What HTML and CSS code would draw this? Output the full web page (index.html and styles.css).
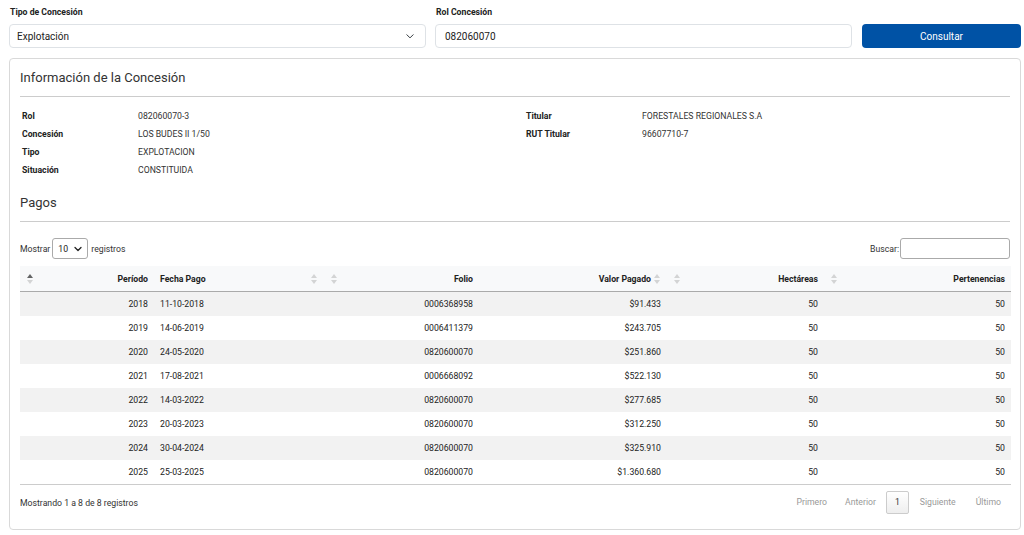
FILE: index.html
```html
<!DOCTYPE html>
<html lang="es">
<head>
    <meta charset="UTF-8">
    <meta name="viewport" content="width=device-width, initial-scale=1.0">
    <title>Consulta de Concesión</title>
    <link rel="stylesheet" href="styles.css">
</head>
<body>
    <form class="search-form">
        <div class="field">
            <label>Tipo de Concesión</label>
            <div class="select-box">
                <span>Explotación</span>
                <svg class="chevron" width="10" height="10" viewBox="0 0 16 16"><path d="M3 6l5 5 5-5" fill="none" stroke="#343a40" stroke-width="1.6" stroke-linecap="round" stroke-linejoin="round"/></svg>
            </div>
        </div>
        <div class="field">
            <label>Rol Concesión</label>
            <div class="text-box">082060070</div>
        </div>
        <div class="field">
            <label>&nbsp;</label>
            <button type="button" class="btn-consultar">Consultar</button>
        </div>
    </form>

    <section class="card">
        <h2 class="card-title">Información de la Concesión</h2>
        <div class="info-grid">
            <div class="info-col">
                <div class="info-row"><span class="info-label">Rol</span><span>082060070-3</span></div>
                <div class="info-row"><span class="info-label">Concesión</span><span>LOS BUDES II 1/50</span></div>
                <div class="info-row"><span class="info-label">Tipo</span><span>EXPLOTACION</span></div>
                <div class="info-row"><span class="info-label">Situación</span><span>CONSTITUIDA</span></div>
            </div>
            <div class="info-col">
                <div class="info-row"><span class="info-label">Titular</span><span>FORESTALES REGIONALES S.A</span></div>
                <div class="info-row"><span class="info-label">RUT Titular</span><span>96607710-7</span></div>
            </div>
        </div>

        <h2 class="card-title pagos-title">Pagos</h2>

        <div class="dt-top">
            <div class="dt-length">
                Mostrar
                <div class="length-select">
                    <span>10</span>
                    <svg width="8" height="8" viewBox="0 0 16 16"><path d="M2 5l6 6 6-6" fill="none" stroke="#222" stroke-width="2.6" stroke-linecap="round" stroke-linejoin="round"/></svg>
                </div>
                registros
            </div>
            <div class="dt-search">
                Buscar:
                <div class="search-box"></div>
            </div>
        </div>

        <table class="pagos">
            <colgroup>
                <col style="width:134px">
                <col style="width:170px">
                <col style="width:155px">
                <col style="width:188px">
                <col style="width:157px">
                <col style="width:187px">
            </colgroup>
            <thead>
                <tr>
                    <th class="num"><span class="sort asc"></span>Período</th>
                    <th class="txt">Fecha Pago<span class="sort"></span></th>
                    <th class="num"><span class="sort"></span>Folio</th>
                    <th class="txt-end">Valor Pagado<span class="sort"></span></th>
                    <th class="num"><span class="sort"></span>Hectáreas</th>
                    <th class="num"><span class="sort"></span>Pertenencias</th>
                </tr>
            </thead>
            <tbody>
                <tr><td>2018</td><td class="left">11-10-2018</td><td>0006368958</td><td>$91.433</td><td>50</td><td>50</td></tr>
                <tr><td>2019</td><td class="left">14-06-2019</td><td>0006411379</td><td>$243.705</td><td>50</td><td>50</td></tr>
                <tr><td>2020</td><td class="left">24-05-2020</td><td>0820600070</td><td>$251.860</td><td>50</td><td>50</td></tr>
                <tr><td>2021</td><td class="left">17-08-2021</td><td>0006668092</td><td>$522.130</td><td>50</td><td>50</td></tr>
                <tr><td>2022</td><td class="left">14-03-2022</td><td>0820600070</td><td>$277.685</td><td>50</td><td>50</td></tr>
                <tr><td>2023</td><td class="left">20-03-2023</td><td>0820600070</td><td>$312.250</td><td>50</td><td>50</td></tr>
                <tr><td>2024</td><td class="left">30-04-2024</td><td>0820600070</td><td>$325.910</td><td>50</td><td>50</td></tr>
                <tr><td>2025</td><td class="left">25-03-2025</td><td>0820600070</td><td>$1.360.680</td><td>50</td><td>50</td></tr>
            </tbody>
        </table>

        <div class="dt-bottom">
            <div class="dt-info">Mostrando 1 a 8 de 8 registros</div>
            <div class="dt-paging">
                <span class="page-link">Primero</span>
                <span class="page-link">Anterior</span>
                <span class="page-link current">1</span>
                <span class="page-link">Siguiente</span>
                <span class="page-link">Último</span>
            </div>
        </div>
    </section>
</body>
</html>
```

FILE: styles.css
```css
body {
    font-family: Roboto, 'Liberation Sans', sans-serif;
    font-size: 8.7px;
    color: #333;
    margin: 0;
    padding: 0 3px 0 9px;
    background-color: #fff;
}

/* Formulario de búsqueda */
.search-form {
    display: grid;
    grid-template-columns: 417px 417px 159px;
    column-gap: 9px;
    padding-top: 6px;
}

.field label {
    display: block;
    font-weight: bold;
    color: #222;
    line-height: 12px;
    margin: 0 0 6px 1px;
}

.select-box,
.text-box {
    box-sizing: border-box;
    height: 24px;
    border: 1px solid #dee2e6;
    border-radius: 4px;
    font-size: 10px;
    color: #222;
    display: flex;
    align-items: center;
    justify-content: space-between;
    padding: 0 9px 0 7px;
}

.text-box {
    padding-left: 9px;
}

.select-box .chevron {
    margin-right: 1px;
}

.btn-consultar {
    width: 159px;
    margin-left: 1px;
    height: 24px;
    border: none;
    border-radius: 4px;
    background-color: #0052a5;
    color: #fff;
    font-family: inherit;
    font-size: 10px;
}

/* Tarjeta */
.card {
    margin-top: 10px;
    width: 1012px;
    box-sizing: border-box;
    border: 1px solid #d9d9d9;
    border-radius: 4px;
    padding: 11px 10px 15px 10px;
}

.card-title {
    font-size: 13px;
    font-weight: normal;
    color: #333;
    line-height: 16px;
    margin: 0;
    padding-bottom: 10px;
    border-bottom: 1px solid #ccc;
}

.pagos-title {
    margin-top: 16px;
}

.info-grid {
    display: grid;
    grid-template-columns: 504px 1fr;
    margin-top: 10px;
}

.info-row {
    display: flex;
    height: 18px;
    align-items: center;
    padding-left: 2px;
}

.info-label {
    width: 116px;
    font-weight: bold;
    color: #222;
}

/* Controles de la tabla */
.dt-top {
    display: flex;
    justify-content: space-between;
    align-items: center;
    margin-top: 16px;
    height: 21px;
}

.dt-length,
.dt-search {
    display: flex;
    align-items: center;
    gap: 3px;
}

.length-select {
    box-sizing: border-box;
    width: 36px;
    height: 21px;
    border: 1px solid #aaa;
    border-radius: 3px;
    display: flex;
    align-items: center;
    justify-content: space-between;
    padding: 0 5px 0 5px;
    margin-left: -1px;
    color: #222;
}

.search-box {
    box-sizing: border-box;
    width: 110px;
    height: 21px;
    border: 1px solid #aaa;
    border-radius: 3px;
    margin-left: -2px;
}

/* Tabla de pagos */
.pagos {
    width: 991px;
    border-collapse: collapse;
    table-layout: fixed;
    margin-top: 7px;
}

.pagos th {
    background-color: #f8f9fa;
    height: 25px;
    font-weight: bold;
    color: #222;
    text-align: right;
    padding: 0 6px;
    border-bottom: 1px solid #aaa;
    position: relative;
}

.pagos th.txt {
    text-align: left;
}

.pagos th.txt-end {
    padding-right: 16px;
}

.sort {
    position: absolute;
    top: 8px;
    width: 6px;
    height: 10px;
}

.sort::before,
.sort::after {
    content: "";
    position: absolute;
    left: 0;
    border-left: 3px solid transparent;
    border-right: 3px solid transparent;
    opacity: 0.15;
}

.sort::before {
    top: 0;
    border-bottom: 4px solid #000;
}

.sort::after {
    top: 6px;
    border-top: 4px solid #000;
}

.sort.asc::before {
    opacity: 0.6;
}

.num .sort {
    left: 7px;
}

.txt .sort,
.txt-end .sort {
    right: 7px;
}

.pagos td {
    height: 24px;
    padding: 0 6px;
    text-align: right;
    color: #222;
}

.pagos td.left {
    text-align: left;
}

.pagos tbody tr:nth-child(odd) {
    background-color: #f2f2f2;
}

.pagos tbody tr:last-child td {
    border-bottom: 1px solid #ccc;
}

.dt-bottom {
    display: flex;
    justify-content: space-between;
    align-items: center;
    margin-top: 6px;
    width: 991px;
}

.dt-paging {
    display: flex;
    align-items: center;
}

.page-link {
    color: #999;
    padding: 0 10px;
    line-height: 21px;
}

.page-link:first-child {
    padding-right: 8px;
}

.page-link.current {
    color: #333;
    border: 1px solid #ccc;
    border-radius: 2px;
    background: linear-gradient(#fff, #eee);
    padding: 0 8px;
    margin: 0 1px 0 0;
}
```
